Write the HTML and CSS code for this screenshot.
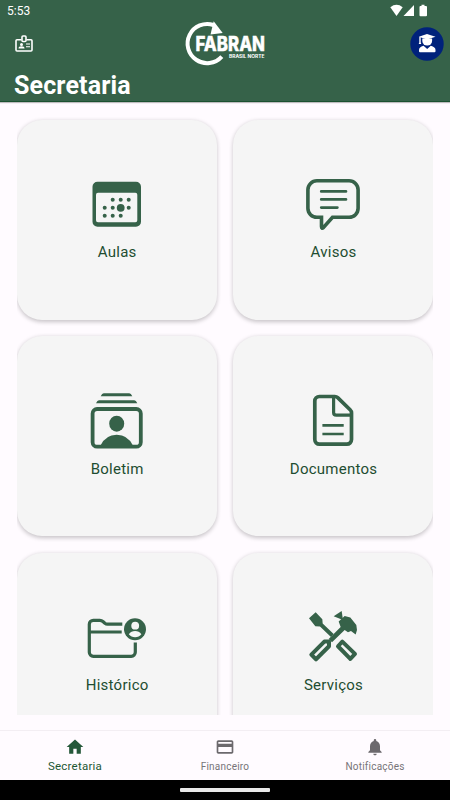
FILE: index.html
```html
<!DOCTYPE html>
<html lang="pt-BR">
<head>
<meta charset="utf-8">
<title>Secretaria</title>
<link rel="stylesheet" href="styles.css">
</head>
<body>
<div class="app">
  <header class="header">
    <div class="status">
      <span>5:53</span>
      <svg class="status-icons" width="40" height="14" viewBox="0 0 40 14" fill="#fff">
        <path d="M.3 3.200Q6.500-1.600 12.700 3.200L6.500 12Z"/>
        <path d="M24 1v11H13.500Z"/>
        <path d="M30 2h1.500V.7h3V2H36q1 0 1 1v8.300q0 1-1 1h-5.500q-1 0-1-1V3q0-1 1-1Z"/>
      </svg>
    </div>
    <div class="toolbar">
      <svg class="badge" width="18" height="18" viewBox="0 0 18 18" fill="none" stroke="#fff" stroke-width="1.600">
        <path d="M6.500 4.700H2q-1 0-1 1V15q0 1 1 1h14q1 0 1-1V5.700q0-1-1-1h-4.500"/>
        <rect x="7" y="1" width="4" height="5.500" rx="1"/>
        <path d="M11 9h4M11 11.700h4" stroke-width="1.100"/>
        <circle cx="6.500" cy="9.400" r="1.500" fill="#fff" stroke="none"/>
        <path d="M3.500 13.500q0-2.200 3-2.200t3 2.200Z" fill="#fff" stroke="none"/>
      </svg>
      <svg class="logo" width="84" height="46" viewBox="0 0 84 46">
        <path d="M35.800 35.600A19.600 19.600 0 1 1 27.500 4" fill="none" stroke="#fff" stroke-width="4"/>
        <path d="M27.700.200 36.700 12 24.500 13.500Z" fill="#fff"/>
        <text class="logo-name" x="9.500" y="30" textLength="69.500" lengthAdjust="spacingAndGlyphs">FABRAN</text>
        <text class="logo-sub" x="43" y="36.700" textLength="35.500" lengthAdjust="spacingAndGlyphs">BRASIL NORTE</text>
      </svg>
      <svg class="avatar" width="34" height="34" viewBox="0 0 34 34">
        <circle cx="17" cy="17" r="16.700" fill="#00227b"/>
        <g fill="#fff">
          <path d="M8.800 9.700 17 7l8.500 2.700L17 12.500Z"/>
          <path d="M9.300 10h1.400v5.500l.6 1.500H8.700l.6-1.500Z"/>
          <path d="M12.300 11.500h9.800v2.200a4.900 4.900 0 0 1-9.800 0Z"/>
          <path d="M13.500 18.800 17.200 22l3.600-3.200q4.700 1.300 4.700 4.200v1.200q0 1-1 1H10q-1 0-1-1V23q0-2.900 4.500-4.200Z"/>
        </g>
      </svg>
    </div>
    <h1 class="title">Secretaria</h1>
  </header>

  <main class="content">
    <div class="grid">
      <section class="card">
        <svg class="icon" viewBox="0 0 60 60">
          <path fill-rule="evenodd" d="M10.500 7.700H49a5 5 0 0 1 5 5v35a5 5 0 0 1-5 5H10.500a5 5 0 0 1-5-5v-35a5 5 0 0 1 5-5ZM11 18.700a2 2 0 0 0-2 2v25.600a2 2 0 0 0 2 2h37.300a2 2 0 0 0 2-2V20.700a2 2 0 0 0-2-2Z"/>
          <circle cx="25.700" cy="25.700" r="2"/><circle cx="33.700" cy="25.700" r="2"/><circle cx="41.700" cy="25.700" r="2"/>
          <circle cx="17.700" cy="33.800" r="2"/><circle cx="25.700" cy="33.800" r="2"/><circle cx="33.700" cy="33.800" r="3.900"/><circle cx="41.700" cy="33.800" r="2"/>
          <circle cx="17.700" cy="41.800" r="2"/><circle cx="25.700" cy="41.800" r="2"/><circle cx="33.700" cy="41.800" r="2"/>
        </svg>
        <span class="label">Aulas</span>
      </section>
      <section class="card">
        <svg class="icon line" viewBox="0 0 60 60">
          <path stroke-width="3.600" d="M13.900 6.800h32.200a9 9 0 0 1 9 9v18.500a9 9 0 0 1-9 9H29.500L20.500 53.500q-2 1.600-2-1V43.300h-4.600a9 9 0 0 1-9-9V15.800a9 9 0 0 1 9-9Z"/>
          <path stroke-width="2.900" stroke-linecap="round" d="M18.300 17.400h24.600M18.300 25.400h24.600M18.300 33.600h16"/>
        </svg>
        <span class="label">Avisos</span>
      </section>
      <section class="card">
        <svg class="icon" viewBox="0 0 60 60">
          <path d="M13.700 5.200q1.300-3 3-3h25.600q1.700 0 3 3ZM9 12.300q1.300-3 3-3h35.300q1.700 0 3 3Z"/>
          <rect x="5.600" y="18" width="48.200" height="37.700" rx="4.500" fill="none" stroke="#366249" stroke-width="3.800"/>
          <ellipse cx="29.700" cy="32.700" rx="7.500" ry="8"/>
          <path d="M13.500 54.500q5-10.800 16.200-10.800t16.200 10.800Z"/>
        </svg>
        <span class="label">Boletim</span>
      </section>
      <section class="card">
        <svg class="icon line" viewBox="0 0 60 60">
          <path stroke-width="3.700" d="M16.400 5.500h15.500q1.600 0 2.800 1.100l12.400 12.200q1.400 1.400 1.400 3V48.600a4.600 4.600 0 0 1-4.600 4.600H16.400a4.600 4.600 0 0 1-4.600-4.600V10.100A4.600 4.600 0 0 1 16.400 5.500Z"/>
          <path stroke-width="3.200" d="M30.600 6.100v15.300q0 2.700 2.700 2.700h15"/>
          <path stroke-width="2.700" d="M19.400 34.400h21.300M19.400 43h21.300"/>
        </svg>
        <span class="label">Documentos</span>
      </section>
      <section class="card">
        <svg class="icon line" viewBox="0 0 60 60">
          <path stroke-width="3.200" d="M35.300 17.200H20.500q-1.500 0-2.600-.9l-2-1.800q-1.300-1.200-3-1.200H6.300a4 4 0 0 0-4 4v28a4 4 0 0 0 4 4h38a4 4 0 0 0 4-4v-9.700"/>
          <path stroke-width="2.800" d="M2.300 25h32.400"/>
          <circle cx="48" cy="22.300" r="11" fill="#366249" stroke="none"/>
          <circle cx="48.200" cy="18.700" r="3.900" fill="#f5f5f5" stroke="none"/>
          <path d="M41.800 27.200q2.400-3.100 6.300-3.100t6.300 3.100q-2.400 3-6.300 3t-6.300-3Z" fill="#f5f5f5" stroke="none"/>
        </svg>
        <span class="label">Histórico</span>
      </section>
      <section class="card">
        <svg class="icon" viewBox="0 0 60 60">
          <g transform="translate(-13 -7.400) scale(.3333)">
            <path d="M57 56 77 38 97 59 98 72 131 103 123 112 90 81 76 80Z"/>
            <path d="M131 50 155 34 159 61Z"/>
            <path d="M146 66 164 49 181 54 199 76 201 91 197 105 183 94 174 98 164 91 126 128 116 118 152 82Z"/>
            <g fill="none" stroke="#366249" stroke-width="12" stroke-linejoin="round">
              <path d="M103 126 64 165 78 179 117 140V126Z"/>
              <path d="M157 126 195 163 181 178 144 140Z"/>
            </g>
          </g>
        </svg>
        <span class="label">Serviços</span>
      </section>
    </div>
  </main>

  <nav class="tabs">
    <div class="tab active">
      <svg width="20" height="20" viewBox="0 0 24 24"><path d="M10 20v-6h4v6h5v-8h3L12 3 2 12h3v8Z"/></svg>
      <span>Secretaria</span>
    </div>
    <div class="tab">
      <svg width="20" height="20" viewBox="0 0 24 24"><path d="M20 4H4c-1.110 0-2 .89-2 2v12c0 1.110.89 2 2 2h16c1.110 0 2-.89 2-2V6c0-1.110-.89-2-2-2Zm0 14H4v-6h16Zm0-10H4V6h16Z"/></svg>
      <span>Financeiro</span>
    </div>
    <div class="tab">
      <svg width="20" height="20" viewBox="0 0 24 24"><path d="M12 22c1.100 0 2-.9 2-2h-4c0 1.100.9 2 2 2Zm6-6v-5c0-3.070-1.630-5.640-4.500-6.320V4a1.500 1.500 0 0 0-3 0v.68C7.640 5.360 6 7.920 6 11v5l-2 2v1h16v-1Z"/></svg>
      <span>Notificações</span>
    </div>
  </nav>
  <footer class="system"><div class="handle"></div></footer>
</div>
</body>
</html>
```

FILE: styles.css
```css
* { box-sizing: border-box; }
body { margin: 0; font-family: Roboto, sans-serif; background: #fffbff; }
svg { display: block; flex: none; }
.app { width: 450px; height: 800px; display: flex; flex-direction: column; overflow: hidden; }

.header {
  height: 102px; flex: none; background: #366249; color: #fff;
  border-bottom: 1px solid #1b5130; box-shadow: 0 1px 1px rgba(0, 0, 0, .25);
  display: flex; flex-direction: column;
}
.status { height: 21px; flex: none; display: flex; justify-content: space-between; padding: 4px 20px 0 7px; font-size: 12px; line-height: 14px; }
.toolbar { height: 46px; flex: none; display: grid; grid-template-columns: 1fr 84px 1fr; align-items: center; padding: 0 6px 0 15px; }
.logo { margin-left: -2px; overflow: visible; }
.avatar { justify-self: end; }
.logo-name { font: 800 20.500px Inter, sans-serif; fill: #fff; stroke: #fff; stroke-width: .4px; }
.logo-sub { font: 700 4.800px Inter, sans-serif; fill: #fff; }
.title { margin: 3px 0 0 14px; font-size: 25px; line-height: 31px; font-weight: 700; letter-spacing: .15px; }

.content { flex: 1; min-height: 0; padding: 0 17px 15px; }
.grid {
  height: 613px; padding-top: 17.500px; overflow: hidden;
  display: grid; grid-template-columns: 1fr 1fr; grid-auto-rows: 200px; gap: 16.700px;
}
.card {
  background: #f5f5f5; border-radius: 25px; box-shadow: 0 1.500px 4px rgba(0, 0, 0, .22);
  display: flex; flex-direction: column; align-items: center; padding-top: 54.500px;
}
.icon { width: 60px; height: 60px; fill: #366249; }
.icon.line { fill: none; stroke: #366249; }
.label { margin-top: 8px; padding-left: .7px; font-size: 15px; line-height: 20px; letter-spacing: .25px; color: #1e4d31; }

.tabs { height: 50px; flex: none; display: grid; grid-template-columns: repeat(3, 1fr); border-top: 1px solid #f3eef3; }
.tab { display: flex; flex-direction: column; align-items: center; padding-top: 6px; color: #777478; fill: #6c696d; font-size: 10px; letter-spacing: .22px; }
.tab span { line-height: 14px; margin-top: 3px; }
.tab.active { color: #1e5733; fill: #25583a; font-size: 11.500px; letter-spacing: .22px; }
.tab.active span { margin-top: 2px; }
.system { height: 20px; flex: none; background: #000; display: flex; justify-content: center; padding-top: 8px; }
.handle { width: 90px; height: 4px; border-radius: 1px; background: #e8e8e8; }
```
